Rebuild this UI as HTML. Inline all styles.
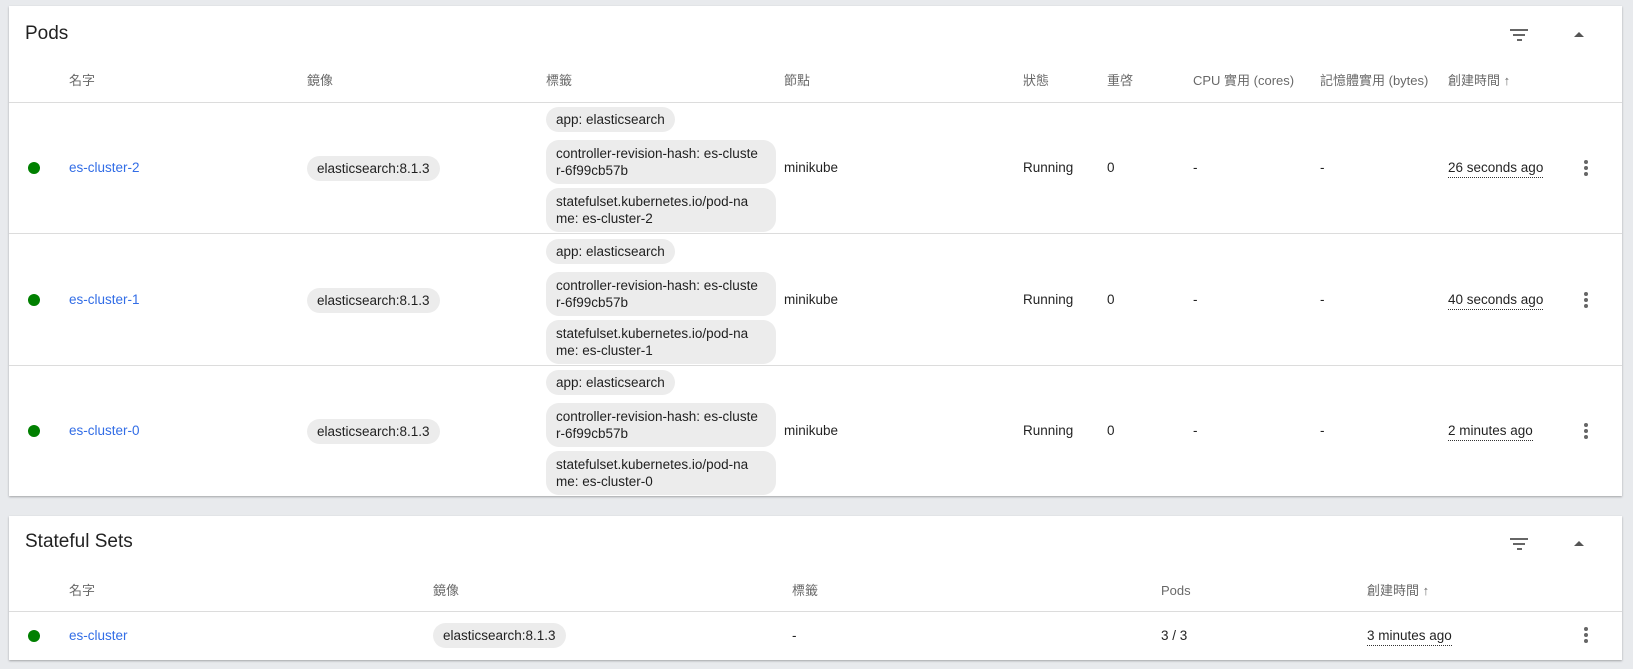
<!DOCTYPE html>
<html><head><meta charset="utf-8"><style>
*{margin:0;padding:0;box-sizing:border-box}
body{width:1633px;height:669px;background:#e8eaed;font-family:"Liberation Sans","Noto Sans CJK TC",sans-serif;font-size:13.5px;color:rgba(0,0,0,.87);position:relative;overflow:hidden}
.card{position:absolute;left:9px;width:1613px;background:#fff;box-shadow:0 1px 2px rgba(0,0,0,.3)}
.a{position:absolute;white-space:nowrap;line-height:18px}
.t{font-size:19px;line-height:24px}
.h{color:rgba(0,0,0,.6);font-size:13px}
.line{position:absolute;left:0;right:0;height:1px;background:#dcdcdc}
.dot{position:absolute;width:12px;height:12px;border-radius:50%;background:#008000}
.lnk{color:#326de6}
.chip{position:absolute;background:#ececec;border-radius:13px;padding:0 10px;line-height:17px;white-space:nowrap}
.u{border-bottom:1px dotted #333}
.m{position:absolute;width:4px}
.m i{display:block;width:4px;height:4px;border-radius:50%;background:#666;margin-bottom:2px}
.f{position:absolute}
.f i{display:block;height:2px;background:#666;margin:0 auto 3px}
.c{position:absolute;width:0;height:0;border-left:5px solid transparent;border-right:5px solid transparent;border-bottom:5px solid #555}
</style></head><body>
<div class="card" style="top:6px;height:490px">
 <div class="a t" style="left:16px;top:16px">Pods</div>
 <div class="f" style="left:1501px;top:23px;width:18px"><i style="width:18px"></i><i style="width:12px"></i><i style="width:5px"></i></div>
 <div class="c" style="left:1565px;top:26px"></div>
 <div class="a h" style="left:60px;top:66px">名字</div>
 <div class="a h" style="left:298px;top:66px">鏡像</div>
 <div class="a h" style="left:537px;top:66px">標籤</div>
 <div class="a h" style="left:775px;top:66px">節點</div>
 <div class="a h" style="left:1014px;top:66px">狀態</div>
 <div class="a h" style="left:1098px;top:66px">重啓</div>
 <div class="a h" style="left:1184px;top:66px">CPU 實用 (cores)</div>
 <div class="a h" style="left:1311px;top:66px">記憶體實用 (bytes)</div>
 <div class="a h" style="left:1439px;top:66px">創建時間 ↑</div>
 <div class="line" style="top:96px"></div>
 <div class="line" style="top:227px"></div>
 <div class="line" style="top:359px"></div>
</div>
<div class="card" style="top:516px;height:144px">
 <div class="a t" style="left:16px;top:14px">Stateful Sets</div>
 <div class="f" style="left:1501px;top:22px;width:18px"><i style="width:18px"></i><i style="width:12px"></i><i style="width:5px"></i></div>
 <div class="c" style="left:1565px;top:25px"></div>
 <div class="a h" style="left:60px;top:66px">名字</div>
 <div class="a h" style="left:424px;top:66px">鏡像</div>
 <div class="a h" style="left:783px;top:66px">標籤</div>
 <div class="a h" style="left:1152px;top:66px">Pods</div>
 <div class="a h" style="left:1358px;top:66px">創建時間 ↑</div>
 <div class="line" style="top:95px"></div>
 <div class="dot" style="left:19px;top:114px"></div>
 <div class="a lnk" style="left:60px;top:111px">es-cluster</div>
 <div class="chip" style="left:424px;top:107px;line-height:25px">elasticsearch:8.1.3</div>
 <div class="a" style="left:783px;top:111px">-</div>
 <div class="a" style="left:1152px;top:111px">3 / 3</div>
 <div class="a u" style="left:1358px;top:111px">3 minutes ago</div>
 <div class="m" style="left:1575px;top:111px"><i></i><i></i><i></i></div>
</div>
<div id="rows"></div>
<script>
var d=[["es-cluster-2","26 seconds ago"],["es-cluster-1","40 seconds ago"],["es-cluster-0","2 minutes ago"]],h="";
d.forEach(function(r,i){var t=102+i*131.5,c=t+66;
h+='<div class="dot" style="left:28px;top:'+(c-6)+'px"></div>'+
'<div class="a lnk" style="left:69px;top:'+(c-9)+'px">'+r[0]+'</div>'+
'<div class="chip" style="left:307px;top:'+(c-12)+'px;line-height:25px">elasticsearch:8.1.3</div>'+
'<div class="chip" style="left:546px;top:'+(t+5)+'px;line-height:25px">app: elasticsearch</div>'+
'<div class="chip" style="left:546px;top:'+(t+38)+'px;width:230px;padding:5px 10px">controller-revision-hash: es-cluste<br>r-6f99cb57b</div>'+
'<div class="chip" style="left:546px;top:'+(t+86)+'px;width:230px;padding:5px 10px">statefulset.kubernetes.io/pod-na<br>me: '+r[0]+'</div>'+
'<div class="a" style="left:784px;top:'+(c-9)+'px">minikube</div>'+
'<div class="a" style="left:1023px;top:'+(c-9)+'px">Running</div>'+
'<div class="a" style="left:1107px;top:'+(c-9)+'px">0</div>'+
'<div class="a" style="left:1193px;top:'+(c-9)+'px">-</div>'+
'<div class="a" style="left:1320px;top:'+(c-9)+'px">-</div>'+
'<div class="a u" style="left:1448px;top:'+(c-9)+'px">'+r[1]+'</div>'+
'<div class="m" style="left:1584px;top:'+(c-8)+'px"><i></i><i></i><i></i></div>';});
document.getElementById("rows").innerHTML=h;
</script>
</body></html>
